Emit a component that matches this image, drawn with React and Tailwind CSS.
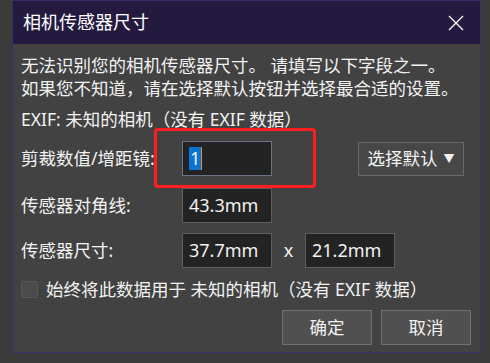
import React from "react";

const font = { fontFamily: '"Noto Sans", "Noto Sans CJK SC", sans-serif' };

const Field = ({ value, focused }) => (
  <div
    className={`w-[90px] h-[35px] bg-[#232323] border flex items-center px-[6px] text-[18px] text-[#f2f2f2] ${
      focused ? "border-[#6b7386]" : "border-[#5e5e5e]"
    }`}
  >
    {focused ? (
      <>
        <span className="bg-[#0a74d4] leading-[23px] px-[1px]">{value}</span>
        <span className="w-[1px] h-[23px] bg-[#f08a24]" />
      </>
    ) : (
      value
    )}
  </div>
);

const App = () => {
  return (
    <div className="relative w-[490px] h-[363px] bg-[#3b3b3b] pl-[12px] overflow-hidden" style={font}>
      <div className="w-[469px] h-[353px] border border-[#3a2e66] bg-[#424242] flex flex-col text-[#f2f2f2]">
        {/* Title */}
        <div className="h-[43px] bg-[#241a40] flex items-center justify-between pl-[10px] pr-[16px] shrink-0">
          <span className="text-[18px] text-white">相机传感器尺寸</span>
          <svg width="16" height="16" viewBox="0 0 16 16" className="text-white">
            <path d="M1 1 L15 15 M15 1 L1 15" stroke="currentColor" strokeWidth="1.3" fill="none" />
          </svg>
        </div>

        {/* Body */}
        <div className="flex flex-col pl-[8px] pr-[9px] pt-[10px] text-[17.5px] leading-[23px]">
          <p>无法识别您的相机传感器尺寸。 请填写以下字段之一。</p>
          <p>如果您不知道，请在选择默认按钮并选择最合适的设置。</p>
          <p className="mt-[8px]">EXIF: 未知的相机（没有 EXIF 数据）</p>

          <div className="flex items-center mt-[10px]">
            <span className="w-[161px]">剪裁数值/增距镜:</span>
            <Field value="1" focused />
            <button className="ml-auto mr-[7px] w-[106px] h-[34px] bg-[#474747] border border-[#6a6a6a] flex items-center justify-center gap-[6px] text-[17.5px] text-[#f2f2f2]">
              选择默认
              <span className="text-[11px]">▼</span>
            </button>
          </div>

          <div className="flex items-center mt-[12px]">
            <span className="w-[161px]">传感器对角线:</span>
            <Field value="43.3mm" />
          </div>

          <div className="flex items-center mt-[10px]">
            <span className="w-[161px]">传感器尺寸:</span>
            <Field value="37.7mm" />
            <span className="w-[33px] text-center text-[18px]">x</span>
            <Field value="21.2mm" />
          </div>

          <div className="flex items-center mt-[10px] h-[22px]">
            <span className="w-[17px] h-[17px] bg-[#4b4b4b] border border-[#575757] rounded-[2px]" />
            <span className="ml-[8px]">始终将此数据用于 未知的相机（没有 EXIF 数据）</span>
          </div>

          <div className="flex justify-end gap-[9px] mt-[10px]">
            <button className="w-[90px] h-[35px] bg-[#505050] border border-[#707070] text-[17.5px] text-[#f2f2f2]">确定</button>
            <button className="w-[90px] h-[35px] bg-[#505050] border border-[#707070] text-[17.5px] text-[#f2f2f2]">取消</button>
          </div>
        </div>
      </div>

      {/* annotation highlight */}
      <div className="absolute left-[154px] top-[128px] w-[162px] h-[60px] border-[3px] border-[#ff1f1f] rounded-[4px]" />
    </div>
  );
};

export default App;
